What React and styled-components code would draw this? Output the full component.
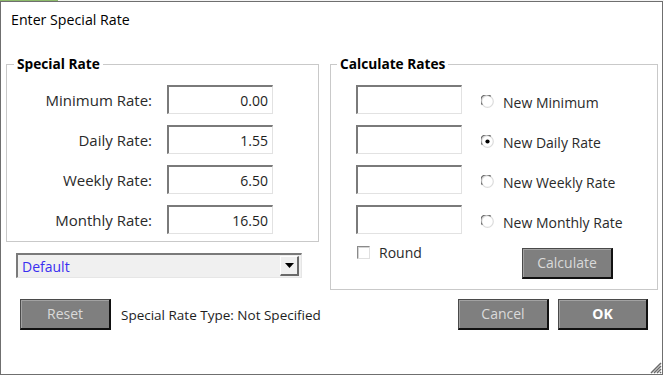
import styled, { createGlobalStyle } from "styled-components";

const GlobalStyle = createGlobalStyle`
  html, body {
    margin: 0;
    padding: 0;
    background: #fff;
  }
  body {
    font-family: "Open Sans", "Noto Sans", sans-serif;
    color: #1e1e1e;
  }
  * {
    box-sizing: border-box;
  }
`;

const TopStrip = styled.div`
  height: 1px;
  width: 664px;
  background: linear-gradient(to right, #8dbb6a 0 58px, #f4f4f4 58px);
`;

const Dialog = styled.div`
  position: relative;
  width: 663px;
  height: 374px;
  border: 1px solid #6f6f6f;
  background: #fff;
`;

const Title = styled.div`
  height: 36px;
  line-height: 36px;
  padding-left: 10px;
  font-size: 14.2px;
  color: #000;
`;

const Body = styled.div`
  display: grid;
  grid-template-columns: 313px 328px;
  column-gap: 11px;
  padding: 18px 0 0 5px;
`;

const Column = styled.div`
  display: flex;
  flex-direction: column;
`;

const Group = styled.fieldset`
  margin: 0;
  border: 1px solid #c9c9c9;
  padding: 13px 0 ${(p) => p.$bottom || 7}px 0;
  min-width: 0;
`;

const Legend = styled.legend`
  margin-left: ${(p) => p.$offset || 7}px;
  padding: 0 3px;
  line-height: 16px;
  font-size: 13.7px;
  font-weight: 700;
  color: #000;
`;

const RateGrid = styled.div`
  display: grid;
  grid-template-columns: 145px 106px;
  column-gap: 15px;
  row-gap: 11px;
  align-items: center;
`;

const Label = styled.label`
  text-align: right;
  font-size: 15px;
  color: #2a2a2a;
  padding-top: 1px;
`;

const TextBox = styled.input`
  width: 106px;
  height: 29px;
  border-style: solid;
  border-width: 2px 1px 1px 2px;
  border-color: #7a7a7a #e2e2e2 #e2e2e2 #7a7a7a;
  background: #fff;
  padding: 0 4px 0 4px;
  text-align: right;
  font-family: inherit;
  font-size: 14px;
  color: #1e1e1e;
  outline: none;
`;

const CalcGrid = styled.div`
  display: grid;
  grid-template-columns: 106px 13px auto;
  column-gap: 19px;
  row-gap: 11px;
  padding-left: 25px;
  align-items: center;

  & > svg {
    margin-top: 3px;
  }
`;

const RadioLabel = styled.span`
  font-size: 14px;
  color: #2a2a2a;
  margin-left: -10px;
  padding-top: 5px;
`;

const CalcFooter = styled.div`
  display: flex;
  align-items: flex-start;
  margin-top: 12px;
  padding-left: 26px;
  padding-right: 44px;
`;

const Check = styled.label`
  display: flex;
  align-items: center;
  gap: 9px;
  font-size: 14px;
  color: #2a2a2a;
  line-height: 13px;
`;

const CheckBox = styled.span`
  width: 13px;
  height: 13px;
  border-style: solid;
  border-width: 1px;
  border-color: #8a8a8a #e0e0e0 #e0e0e0 #8a8a8a;
  background: #fff;
  box-shadow: inset 1px 1px 0 #d4d4d4;
`;

const Button = styled.button`
  width: ${(p) => p.$width || 91}px;
  height: 31px;
  margin-top: ${(p) => p.$top || 0}px;
  margin-left: ${(p) => (p.$push ? "auto" : "0")};
  flex-shrink: 0;
  background: #7f7f7f;
  border-style: solid;
  border-width: 1px 2px 2px 1px;
  border-color: #4a4a4a #111 #111 #4a4a4a;
  box-shadow: inset 1px 1px 0 #a2a2a2;
  padding: 0 0 2px 0;
  font-family: inherit;
  font-size: 14px;
  font-weight: ${(p) => (p.$primary ? 700 : 400)};
  color: ${(p) => (p.$primary ? "#fff" : "#dadada")};
`;

const Select = styled.div`
  display: flex;
  align-items: center;
  justify-content: space-between;
  width: 286px;
  height: 25px;
  margin: 11px 0 0 10px;
  border-style: solid;
  border-width: 2px 1px 1px 2px;
  border-color: #7a7a7a #e6e6e6 #e6e6e6 #7a7a7a;
  background: #f0f0f0;
  padding: 0 2px 0 4px;
  font-size: 14px;
  color: #3a2ef0;
`;

const Arrow = styled.span`
  display: flex;
  align-items: center;
  justify-content: center;
  width: 19px;
  height: 20px;
  background: #f0f0f0;
  border-style: solid;
  border-width: 1px 2px 2px 1px;
  border-color: #fff #6a6a6a #6a6a6a #fff;
`;

const Footer = styled.div`
  display: flex;
  align-items: center;
  gap: 10px;
  margin: 21px 0 0 14px;
`;

const Status = styled.span`
  font-size: 13.5px;
  white-space: nowrap;
  color: #1e1e1e;
`;

const Actions = styled.div`
  display: flex;
  justify-content: flex-end;
  gap: 9px;
  margin-top: 9px;
  padding-right: 10px;
`;

const Grip = styled.svg`
  position: absolute;
  right: 0;
  bottom: 0;
`;

const Radio = ({ checked }) => (
  <svg width="13" height="13" viewBox="0 0 13 13">
    <circle cx="6.5" cy="6.5" r="5.8" fill="#fff" stroke="#dcdcdc" strokeWidth="1.2" />
    <path d="M1.4 9.8 A5.8 5.8 0 0 1 9.8 1.4" fill="none" stroke="#6e6e6e" strokeWidth="1.3" />
    {checked && <circle cx="6.5" cy="6.5" r="2.1" fill="#000" />}
  </svg>
);

const rates = [
  ["Minimum Rate:", "0.00"],
  ["Daily Rate:", "1.55"],
  ["Weekly Rate:", "6.50"],
  ["Monthly Rate:", "16.50"],
];

const options = ["New Minimum", "New Daily Rate", "New Weekly Rate", "New Monthly Rate"];

export default function App() {
  return (
    <>
      <GlobalStyle />
      <TopStrip />
      <Dialog>
        <Title>Enter Special Rate</Title>
        <Body>
          <Column>
            <Group>
              <Legend>Special Rate</Legend>
              <RateGrid>
                {rates.map(([label, value]) => [
                  <Label key={label}>{label}</Label>,
                  <TextBox key={label + "v"} defaultValue={value} />,
                ])}
              </RateGrid>
            </Group>
            <Select>
              Default
              <Arrow>
                <svg width="9" height="5" viewBox="0 0 9 5">
                  <path d="M0 0 H9 L4.5 5 Z" fill="#000" />
                </svg>
              </Arrow>
            </Select>
            <Footer>
              <Button>Reset</Button>
              <Status>Special Rate Type: Not Specified</Status>
            </Footer>
          </Column>
          <Column>
            <Group $bottom={10}>
              <Legend $offset={6}>Calculate Rates</Legend>
              <CalcGrid>
                {options.map((opt, i) => [
                  <TextBox key={opt} />,
                  <Radio key={opt + "r"} checked={i === 1} />,
                  <RadioLabel key={opt + "l"}>{opt}</RadioLabel>,
                ])}
              </CalcGrid>
              <CalcFooter>
                <Check>
                  <CheckBox />
                  Round
                </Check>
                <Button $push $top={2}>
                  Calculate
                </Button>
              </CalcFooter>
            </Group>
            <Actions>
              <Button>Cancel</Button>
              <Button $primary $width={90}>
                OK
              </Button>
            </Actions>
          </Column>
        </Body>
        <Grip width="14" height="14" viewBox="0 0 14 14">
          <path
            d="M13 3 L3 13 M13 6 L6 13 M13 9 L9 13 M13 12 L12 13"
            stroke="#6a6a6a"
            strokeWidth="1.5"
          />
        </Grip>
      </Dialog>
    </>
  );
}
